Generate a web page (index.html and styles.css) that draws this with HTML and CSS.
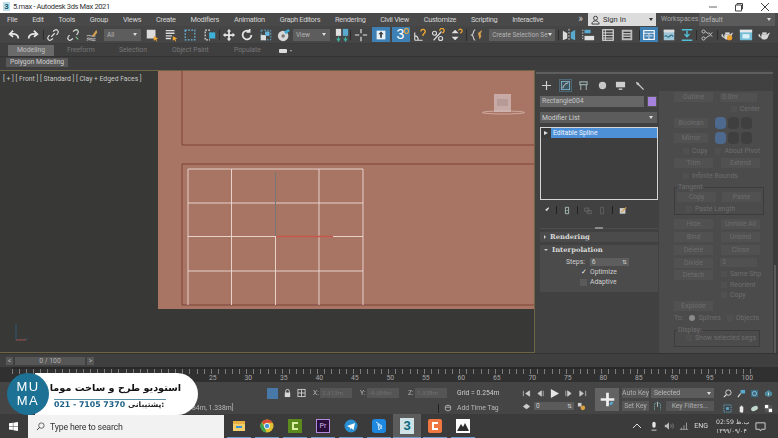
FILE: index.html
```html
<!DOCTYPE html>
<html lang="en">
<head>
<meta charset="utf-8">
<title>5.max - Autodesk 3ds Max 2021</title>
<link rel="stylesheet" href="styles.css">
</head>
<body>
<svg class="defs" width="0" height="0">
  <symbol id="bracket" viewBox="0 0 16 16"><rect x="2.500" y="2.500" width="11" height="11" fill="none" stroke="#68b4dc" stroke-width="1.400" stroke-dasharray="2 1.500"/></symbol>
  <symbol id="teapot" viewBox="0 0 16 16"><path d="M2 7c2-1 1 3 3 3l0-3h7l1-1 2-1-2 4c-1 3-2 4-4 4H7c-1 0-2-1-2-2C2 11 1 8 2 7z" fill="#d8d8d8"/><rect x="6" y="5" width="5" height="2" fill="#d8d8d8"/></symbol>
</svg>

<div class="app">
  <header class="titlebar">
    <div class="title-left">
      <span class="app-icon">3</span>
      <span class="title-text">5.max - Autodesk 3ds Max 2021</span>
    </div>
    <div class="winbtns">
      <svg class="winbtn" viewBox="0 0 10 10"><path d="M1 5h8" stroke="#666" stroke-width="1"/></svg>
      <svg class="winbtn" viewBox="0 0 10 10"><path d="M1.500 3h6v6h-6zM3 3V1.500h5.500V7H7.500" fill="none" stroke="#444" stroke-width="1"/></svg>
      <svg class="winbtn" viewBox="0 0 10 10"><path d="M1 1l8 8M9 1l-8 8" stroke="#444" stroke-width="1"/></svg>
    </div>
  </header>

  <nav class="menubar">
    <div class="menus">
      <span>File</span><span>Edit</span><span>Tools</span><span>Group</span><span>Views</span><span>Create</span><span>Modifiers</span><span>Animation</span><span>Graph Editors</span><span>Rendering</span><span>Civil View</span><span>Customize</span><span>Scripting</span><span>Interactive</span>
    </div>
    <div class="menu-right">
      <span class="more">&raquo;</span>
      <div class="signin">
        <svg class="person" viewBox="0 0 10 10"><circle cx="5" cy="3" r="2.200" fill="none" stroke="#333"/><path d="M1 9.500h8C9 7 7 6 5 6S1 7 1 9.500z" fill="none" stroke="#333"/></svg>
        <span>Sign In</span><i class="caret dark"></i>
      </div>
      <span class="ws-label">Workspaces:</span>
      <div class="ws-drop"><span>Default</span><i class="caret"></i></div>
    </div>
  </nav>

  <div class="toolbar">
    <div class="ti m4"><svg viewBox="0 0 16 16"><path d="M13 12c0-4-3-6-9-5M7 3L3 7l4 3" fill="none" stroke="#e6e6e6" stroke-width="2"/></svg></div>
    <div class="ti"><svg viewBox="0 0 16 16"><path d="M3 12c0-4 3-6 9-5M9 3l4 4-4 3" fill="none" stroke="#e6e6e6" stroke-width="2"/></svg></div>
    <div class="ti m1 sep"><svg viewBox="0 0 16 16"><path d="M6 10l4-4M4 8L2.500 10a2.500 2.500 0 0 0 3.500 3.500L8 12M8 4l2-1.500A2.500 2.500 0 0 1 13.500 6L12 8" fill="none" stroke="#dcdcdc" stroke-width="1.400"/></svg></div>
    <div class="ti"><svg viewBox="0 0 16 16"><path d="M4 8L2.500 10a2.500 2.500 0 0 0 3.500 3.500L8 12M8 4l2-1.500A2.500 2.500 0 0 1 13.500 6L12 8" fill="none" stroke="#dcdcdc" stroke-width="1.400"/><path d="M11 10l3 3M12 3l2-1" stroke="#7ecb8f" stroke-width="1.200"/></svg></div>
    <div class="ti"><svg viewBox="0 0 16 16"><path d="M2 9c3-2 6 2 10 0M2 12c3-2 6 2 10 0M2 14c3-2 6 1 10 0" fill="none" stroke="#c8c8c8"/><path d="M8 9l5-7 1 3-4 5z" fill="#d9a24e"/></svg></div>
    <div class="drop d-all"><span>All</span><i class="caret"></i></div>
    <div class="ti m1"><svg viewBox="0 0 16 16"><rect x="2" y="2" width="10" height="10" fill="#dcdcdc"/><path d="M10 9l5 3-2 1 1 2-1 .500-1-2-2 1z" fill="#f0a830"/></svg></div>
    <div class="ti"><svg viewBox="0 0 16 16"><path d="M2 3h10M2 6h10M2 9h7M2 12h6" stroke="#dcdcdc" stroke-width="1.500"/><path d="M10 9l5 3-2 1 1 2-1 .500-1-2-2 1z" fill="#f0a830"/></svg></div>
    <div class="ti"><svg viewBox="0 0 16 16"><use href="#bracket"/></svg></div>
    <div class="ti"><svg viewBox="0 0 16 16"><path d="M8 2.500H2.500v11H8" fill="none" stroke="#e0e0e0" stroke-dasharray="2 1.500" stroke-width="1.400"/><rect x="7" y="5" width="7" height="7" fill="#3fb1d6"/></svg></div>
    <div class="ti-s m1 sep"><svg viewBox="0 0 16 16"><path d="M8 1l2.500 3h-1.500v3h3V5.500L15 8l-3 2.500V9H9v3h1.500L8 15l-2.500-3H7V9H4v1.500L1 8l3-2.500V7h3V4H5.500z" fill="#e6e6e6"/></svg></div>
    <div class="ti-s"><svg viewBox="0 0 16 16"><path d="M13 8a5 5 0 1 1-2-4M11 1v3.500h-3.500" fill="none" stroke="#e6e6e6" stroke-width="2"/></svg></div>
    <div class="ti-s"><svg viewBox="0 0 16 16"><rect x="2.500" y="2.500" width="11" height="11" fill="none" stroke="#68b4dc" stroke-dasharray="2 1.500"/><rect x="2" y="8" width="6" height="6" fill="#dcdcdc"/><rect x="7" y="4" width="5" height="5" fill="#68b4dc"/></svg></div>
    <div class="ti-s"><svg viewBox="0 0 16 16"><circle cx="7" cy="9" r="6" fill="#d8d8d8"/><circle cx="7" cy="9" r="2" fill="#777"/><path d="M8 4l5-3 2 2-5 4z" fill="#3fa9cf"/></svg></div>
    <div class="drop d-view"><span>View</span><i class="caret"></i></div>
    <div class="ti m2"><svg viewBox="0 0 16 16"><rect x="1" y="1" width="6" height="8" fill="#e0e0e0"/><rect x="9" y="1" width="6" height="8" fill="#5aa9cf"/><path d="M4 15V10M2 12l2 3 2-3M12 15V10M10 12l2 3 2-3" stroke="#3fb1a0" fill="none" stroke-width="1.200"/></svg></div>
    <div class="ti sep"><svg viewBox="0 0 16 16"><path d="M8 1v14M1 8h14" stroke="#e6e6e6" stroke-width="1.300"/><path d="M6 6h4v4H6z" fill="#444"/></svg></div>
    <div class="ti on"><svg viewBox="0 0 16 16"><rect x="3" y="3" width="10" height="10" fill="#e8f2f8"/><path d="M8 4l3 3H9v4H7V7H5z" fill="#3b3b3b"/></svg></div>
    <div class="ti on wide"><span class="snap">3</span><em class="mag"></em></div>
    <div class="ti-s"><svg viewBox="0 0 16 16"><path d="M2 14V5M2 14h9M2 9c3 0 4 2 4 5" fill="none" stroke="#dcdcdc" stroke-width="1.300"/><path d="M9 4a2.500 2.500 0 1 1 4 2l-1.500 1.500V9" fill="none" stroke="#f0a830" stroke-width="1.500"/></svg></div>
    <div class="ti-s"><svg viewBox="0 0 16 16"><path d="M3 14L12 4" stroke="#dcdcdc" stroke-width="1.300"/><circle cx="4" cy="6" r="2.300" fill="none" stroke="#dcdcdc" stroke-width="1.300"/><circle cx="11" cy="12" r="2.300" fill="none" stroke="#dcdcdc" stroke-width="1.300"/><path d="M10 3a2.500 2.500 0 1 1 4 2l-1 1" fill="none" stroke="#f0a830" stroke-width="1.500"/></svg></div>
    <div class="ti-s"><svg viewBox="0 0 16 16"><path d="M7 2l4 4H3zM7 14l4-4H3z" fill="#e0e0e0"/><path d="M11 3a2 2 0 1 1 3 2l-1 1" fill="none" stroke="#f0a830" stroke-width="1.400"/></svg></div>
    <span class="vsep"></span>
    <div class="ti-s"><svg viewBox="0 0 16 16"><path d="M6 2C3 2 5 7 2 8c3 1 1 6 4 6" fill="none" stroke="#d8d8d8" stroke-width="1.200"/><path d="M9 6l5-4-2 5 1 2-2 4-1-4z" fill="#d8a050"/></svg></div>
    <div class="drop d-sel"><span>Create Selection Se</span><i class="caret"></i></div>
    <div class="ti m4 sep"><svg viewBox="0 0 16 16"><path d="M1 3l5 3v6l-5 2z" fill="#dcdcdc"/><path d="M15 2l-5 3v7l5 2z" fill="#5aa9cf"/><path d="M8 1v14" stroke="#e6e6e6" stroke-dasharray="2 1.500"/></svg></div>
    <div class="ti"><svg viewBox="0 0 16 16"><path d="M2 2v12" stroke="#e0e0e0" stroke-dasharray="1.500 1.500"/><rect x="4" y="2" width="7" height="4" fill="#5aa9cf"/><rect x="4" y="9" width="11" height="5" fill="#e0e0e0"/></svg></div>
    <div class="ti"><svg viewBox="0 0 16 16"><rect x="2" y="2" width="12" height="12" fill="none" stroke="#e0e0e0" stroke-width="1.300"/><path d="M2 5.500h12M2 8.500h12M2 11.500h12M5 2v12" stroke="#e0e0e0"/></svg></div>
    <div class="ti"><svg viewBox="0 0 16 16"><rect x="2" y="2" width="12" height="12" fill="#bdbdbd"/><path d="M4 5h8M4 8h8M4 11h8" stroke="#3a3a3a" stroke-width="1.400"/></svg></div>
    <div class="ti on mla sep"><svg viewBox="0 0 16 16"><rect x="2" y="3" width="12" height="10" fill="none" stroke="#fff" stroke-width="1.300"/><path d="M2 6h12M8 6v7M4 9h3M9 9h3" stroke="#fff"/></svg></div>
    <div class="ti"><svg viewBox="0 0 16 16"><rect x="2" y="2" width="12" height="12" fill="#9fc6d8"/><rect x="2" y="2" width="12" height="3" fill="#ddd"/><path d="M3 10c2-4 3 2 5 0s3-3 5 0" stroke="#2b6f8a" fill="none" stroke-width="1.300"/></svg></div>
    <div class="ti-s"><svg viewBox="0 0 16 16"><path d="M2 2h12M2 14h12" stroke="#52c0d8" stroke-width="1.600"/><path d="M8 3v7M5 7l3 3 3-3" stroke="#52c0d8" stroke-width="1.600" fill="none"/></svg></div>
    <div class="ti m1 sep"><svg viewBox="0 0 16 16"><circle cx="4" cy="4" r="1.800" fill="none" stroke="#ccc"/><circle cx="4" cy="12" r="1.800" fill="none" stroke="#ccc"/><path d="M6 4l4 3M6 12l4-3M10 5l4 5M14 5l-4 5" stroke="#ccc"/></svg></div>
    <div class="ti m1 sep"><svg viewBox="0 0 16 16"><use href="#teapot"/><circle cx="11" cy="11" r="3" fill="#e8a030"/></svg></div>
    <div class="ti-s"><svg viewBox="0 0 16 16"><rect x="1" y="2" width="14" height="12" fill="#72bcd6"/><rect x="1" y="2" width="14" height="3" fill="#e6e6e6"/><rect x="4" y="7" width="8" height="5" fill="#d9eef6"/></svg></div>
    <div class="ti-s"><svg viewBox="0 0 16 16"><use href="#teapot"/></svg></div>
  </div>

  <div class="ribbon-tabs">
    <span class="tab active">Modeling</span><span class="tab t-free">Freeform</span><span class="tab t-sel">Selection</span><span class="tab t-obj">Object Paint</span><span class="tab t-pop">Populate</span>
    <span class="tab-btn"></span><i class="caret tiny"></i>
  </div>
  <div class="ribbon-sub"><span class="poly">Polygon Modeling</span></div>

  <main class="main">
    <section class="viewport">
      <div class="vp-label">[ + ] [ Front ] [ Standard ] [ Clay + Edged Faces ]</div>
      <svg class="scene" viewBox="0 0 535 284" width="535" height="284">
        <rect x="158" y="0" width="376" height="239" fill="#a87565"/>
        <path d="M182 0v75h352M534 94H182v141h352" fill="none" stroke="#7c4334" stroke-width="1"/>
        <g stroke="#eddcd5" stroke-width="1" fill="none" opacity=".9">
          <path d="M188 99h175v136M188 99v136M231.500 99v136M319 99v136M275.500 166v69M188 133h175M188 166.500h175M188 201h175"/>
        </g>
        <path d="M275.500 102v64" stroke="#777" stroke-width="1"/>
        <path d="M276 166.500h57" stroke="#c2574a" stroke-width="1.400"/>
        <rect x="494" y="24" width="17" height="18" fill="#c7aaa6"/>
        <rect x="497" y="29" width="11" height="7" fill="#b69a96"/>
        <ellipse cx="503.500" cy="42.500" rx="21" ry="1.500" fill="none" stroke="#dfc5bc" stroke-width="1" opacity=".65"/>
        <path d="M16 270l0-16M16 270l12-1" stroke="#32566e" stroke-width="1"/><path d="M16 270l10 0" stroke="#a0453a" stroke-width="1"/>
      </svg>
    </section>

    <aside class="cmd">
      <div class="cmd-main">
        <div class="cmd-grip"></div>
        <div class="cmd-tabs">
          <svg viewBox="0 0 12 12"><path d="M6 1v10M1 6h10" stroke="#cfcfcf" stroke-width="1.300"/></svg>
          <svg class="tab-on" viewBox="0 0 12 12"><rect x="1.500" y="1.500" width="9" height="9" fill="#3d5561" stroke="#7fb6cc"/><path d="M3 9c1-3 2-5 6-6" stroke="#d8d8d8" fill="none"/></svg>
          <svg viewBox="0 0 12 12"><path d="M2 2h8v3H2zM3 5v6M9 5v6" fill="none" stroke="#9aa" stroke-width="1.200"/></svg>
          <svg viewBox="0 0 12 12"><circle cx="6" cy="6" r="4" fill="#c8c8c8"/></svg>
          <svg viewBox="0 0 12 12"><rect x="1" y="2" width="10" height="6" fill="#cfcfcf"/><path d="M4 10h4" stroke="#cfcfcf" stroke-width="1.500"/></svg>
          <svg viewBox="0 0 12 12"><path d="M2 2l3 1 1 2 5 5-1 1-5-5-2-1z" fill="#c8c8c8"/></svg>
        </div>
        <div class="name-row"><span class="name-field">Rectangle004</span><span class="swatch"></span></div>
        <div class="mod-list"><span>Modifier List</span><i class="caret"></i></div>
        <div class="stack">
          <div class="stack-row"><span class="expander"></span><span>Editable Spline</span></div>
        </div>
        <div class="stack-tools">
          <svg viewBox="0 0 10 10"><path d="M1 9l4-4 1 1 3-4-1-1-4 3 1 1-4 4z" fill="#d8d8d8"/></svg><b></b>
          <svg viewBox="0 0 10 10"><path d="M3 1h4v8H3z" fill="none" stroke="#b8d0c8"/><path d="M4 5h2" stroke="#8dbba8"/></svg><b></b>
          <svg viewBox="0 0 10 10"><path d="M1 2h5v4H1zM4 5h5v4H4z" fill="none" stroke="#6c6c6c"/></svg>
          <svg viewBox="0 0 10 10"><path d="M3 1h4v8H3z" fill="none" stroke="#656565"/></svg><b></b>
          <svg viewBox="0 0 10 10"><rect x="1" y="2" width="7" height="7" fill="#cfcfcf"/><path d="M3 7l6-6" stroke="#d8a040" stroke-width="1.400"/></svg>
        </div>
        <div class="splitter"><span></span></div>
        <div class="rollout r-head"><i class="arrow"></i><strong>Rendering</strong></div>
        <div class="rollout r-body">
          <div class="r-title"><i class="arrow down"></i><strong>Interpolation</strong></div>
          <div class="steps"><span>Steps:</span><span class="spin"><span>6</span><em>&#8645;</em></span></div>
          <label class="chk"><i class="box checked">&#10003;</i>Optimize</label>
          <label class="chk"><i class="box"></i>Adaptive</label>
        </div>
      </div>

      <div class="ghost">
        <div class="g-row h12"><span class="gb w20">Outline</span><span class="gf">0.0m</span></div>
        <div class="g-row h12"><span class="gspace"></span><span class="gc"><i></i>Center</span></div>
        <div class="g-row h15"><span class="gb wb">Boolean</span><span class="tri"><i class="sel"></i><i></i><i></i></span></div>
        <div class="g-row h15"><span class="gb wb">Mirror</span><span class="tri"><i class="sel"></i><i></i><i></i></span></div>
        <div class="g-row h11"><span class="gc l1"><i></i>Copy</span><span class="gc"><i></i>About Pivot</span></div>
        <div class="g-row h13"><span class="gb">Trim</span><span class="gb">Extend</span></div>
        <div class="g-row h13"><span class="gc l1"><i></i>Infinite Bounds</span></div>
        <fieldset class="g-group">
          <legend>Tangent</legend>
          <div class="g-row h12"><span class="gb">Copy</span><span class="gb">Paste</span></div>
          <div class="g-row h11"><span class="gc l1"><i></i>Paste Length</span></div>
        </fieldset>
        <div class="g-row h13"><span class="gb">Hide</span><span class="gb">Unhide All</span></div>
        <div class="g-row h13"><span class="gb">Bind</span><span class="gb">Unbind</span></div>
        <div class="g-row h13"><span class="gb">Delete</span><span class="gb">Close</span></div>
        <div class="g-row h13"><span class="gb">Divide</span><span class="gf">3</span></div>
        <div class="g-detach">
          <span class="gb">Detach</span>
          <div class="g-col">
            <span class="gc"><i></i>Same Shp</span>
            <span class="gc"><i></i>Reorient</span>
            <span class="gc"><i></i>Copy</span>
          </div>
        </div>
        <div class="g-row h12"><span class="gb">Explode</span></div>
        <div class="g-row h12 g-to"><span>To:</span><span class="gc"><i class="radio"></i>Splines</span><span class="gc"><i></i>Objects</span></div>
        <fieldset class="g-group g-display">
          <legend>Display:</legend>
          <span class="gc l1"><i></i>Show selected segs</span>
        </fieldset>
      </div>
      <div class="cmd-scroll"><span></span></div>
    </aside>
  </main>

  <div class="timeslider">
    <span class="ts-btn">&lt;</span><span class="ts-bar">0 / 100</span><span class="ts-btn">&gt;</span>
  </div>

  <div class="track">
    <div class="ticks"></div>
    <div class="frames">
      <span>25</span><span>30</span><span>35</span><span>40</span><span>45</span><span>50</span><span>55</span><span>60</span><span>65</span><span>70</span><span>75</span><span>80</span><span>85</span><span>90</span><span>95</span><span>100</span>
    </div>
  </div>

  <div class="status">
    <div class="st-left">
      <div class="st-coords">
        <span class="st-on"></span>
        <svg viewBox="0 0 10 10"><rect x="2" y="4.500" width="6" height="5" fill="#d8d8d8"/><path d="M3 5V3a2 2 0 0 1 4 0v2" fill="none" stroke="#d8d8d8"/></svg>
        <svg viewBox="0 0 10 10"><rect x="1" y="1" width="8" height="8" fill="none" stroke="#d0d0d0"/><path d="M5 1v8M1 5h8" stroke="#d0d0d0"/></svg>
        <span class="ax">X:</span><span class="cf">2.313m</span>
        <span class="ax ay">Y:</span><span class="cf">-4.384m</span>
        <span class="ax az">Z:</span><span class="cf">1.338m</span>
        <span class="grid-txt">Grid = 0.254m</span>
      </div>
      <div class="st-tag">
        <span class="coord-end">84m, 1.338m]</span>
        <span class="tag-sep"></span>
        <svg viewBox="0 0 10 10"><circle cx="5" cy="5" r="3.600" fill="none" stroke="#c0c0c0"/><path d="M2 4h6" stroke="#c0c0c0"/></svg>
        <span>Add Time Tag</span>
      </div>
    </div>
    <div class="st-play">
      <div class="play-row">
        <svg viewBox="0 0 10 10"><path d="M1.500 2v6M8.500 2L4 5l4.500 3z M3 5" fill="#ccc" stroke="#ccc" stroke-width=".8"/></svg>
        <svg viewBox="0 0 10 10"><path d="M6 2L2 5l4 3zM8 2v6" fill="#ccc" stroke="#ccc" stroke-width=".8"/></svg>
        <svg viewBox="0 0 10 10"><path d="M1 0l9 5-9 5z" fill="#e6e6e6"/></svg>
        <svg viewBox="0 0 10 10"><path d="M4 2l4 3-4 3zM2 2v6" fill="#ccc" stroke="#ccc" stroke-width=".8"/></svg>
        <svg viewBox="0 0 10 10"><path d="M2 2l4 3-4 3zM8.500 2v6" fill="#ccc" stroke="#ccc" stroke-width=".8"/></svg>
      </div>
      <div class="play-row second">
        <svg viewBox="0 0 10 10"><path d="M5 2L1 5l4 3zM5 2l4 3-4 3z" fill="#ccc"/></svg>
        <span class="frame-field"><span>0</span><em>&#8645;</em></span>
        <svg viewBox="0 0 10 10"><rect x="1" y="1" width="4" height="4" fill="#d0d0d0"/><circle cx="6.500" cy="6.500" r="2.600" fill="#d8a040"/></svg>
      </div>
    </div>
    <button class="plus" type="button"><svg viewBox="0 0 20 20"><path d="M10 2v16M2 10h16" stroke="#f0f0f0" stroke-width="3.200"/><path d="M12 15l3-3 2 2-3 3z" fill="#5aa9cf"/></svg></button>
    <div class="keys">
      <div class="key-row"><span class="kbtn">Auto Key</span><span class="kdrop"><span>Selected</span><i class="caret"></i></span></div>
      <div class="key-row"><span class="kbtn">Set Key</span>
        <svg class="kicon" viewBox="0 0 12 12"><path d="M2 11V3l4-2 4 2v8" fill="none" stroke="#68b8c0" stroke-dasharray="2 1"/><path d="M6 1v6" stroke="#ddd"/></svg>
        <span class="kbtn filters">Key Filters...</span></div>
    </div>
    <div class="nav">
      <svg viewBox="0 0 10 10"><circle cx="6" cy="4" r="3" fill="none" stroke="#ddd"/><path d="M4 6L1 9" stroke="#ddd" stroke-width="1.400"/></svg>
      <svg viewBox="0 0 10 10"><rect x="4" y="1" width="5" height="4" fill="#5aa9cf"/><path d="M4 5L1 9" stroke="#ddd" stroke-width="1.300"/></svg>
      <svg viewBox="0 0 10 10"><rect x="1" y="1" width="8" height="8" fill="#3d6a80"/><circle cx="5" cy="5" r="2.400" fill="none" stroke="#8cc8e0"/></svg>
      <svg viewBox="0 0 10 10"><path d="M5 1l4 3v3L5 9 1 7V4z" fill="#4d8ba0"/><path d="M5 4v3" stroke="#ddd"/></svg>
      <svg viewBox="0 0 10 10"><rect x="1" y="1" width="8" height="8" fill="none" stroke="#5aa9cf" stroke-dasharray="1.500 1"/><rect x="3.500" y="3.500" width="3" height="3" fill="#5aa9cf"/></svg>
      <svg viewBox="0 0 10 10"><path d="M3 9V3h1v3-4h1v4-4h1v4-3h1v5l-1 2z" fill="#e8e8e8"/></svg>
      <svg viewBox="0 0 10 10"><ellipse cx="5" cy="5" rx="4" ry="2.500" fill="#c0d8cc" transform="rotate(-25 5 5)"/></svg>
      <svg viewBox="0 0 10 10"><rect x="1" y="1" width="4" height="4" fill="#fff"/><rect x="5" y="5" width="4" height="4" fill="#fff"/><rect x="5" y="1" width="4" height="4" fill="#555"/><rect x="1" y="5" width="4" height="4" fill="#555"/></svg>
    </div>
  </div>

  <footer class="taskbar">
    <svg class="winlogo" viewBox="0 0 10 10"><path d="M0 1.500l4.300-.6v3.800H0zM4.800.8L10 0v4.700H4.800zM0 5.200h4.300V9L0 8.400zM4.800 5.200H10V10l-5.200-.8z" fill="#fff"/></svg>
    <div class="search">
      <svg viewBox="0 0 10 10"><circle cx="6" cy="4" r="3" fill="none" stroke="#333" stroke-width=".8"/><path d="M4 6L1 9" stroke="#333"/></svg>
      <span>Type here to search</span>
    </div>
    <div class="apps">
      <span class="tb-app run"><svg viewBox="0 0 14 14"><rect x="1" y="2" width="12" height="10" fill="#e8b040"/><rect x="1" y="5" width="12" height="7" fill="#f2cf6a"/><rect x="4" y="7" width="6" height="2" fill="#3a8fd0"/></svg></span>
      <span class="tb-app run"><svg viewBox="0 0 14 14"><circle cx="7" cy="7" r="6.500" fill="#e0c030"/><path d="M7 .5a6.500 6.500 0 0 1 5.600 3.300H7a3 3 0 0 0-3 2L1.600 3.300A6.500 6.500 0 0 1 7 .5z" fill="#d84a38"/><path d="M1.600 3.300L4.500 8.500l2 5A6.500 6.500 0 0 1 1.600 3.300z" fill="#3aa050"/><circle cx="7" cy="7" r="2.700" fill="#4a90d8" stroke="#fff" stroke-width=".8"/></svg></span>
      <span class="tb-app run"><svg viewBox="0 0 14 14"><rect width="14" height="14" fill="#5d8a1c"/><path d="M10 4H5v6h5" fill="none" stroke="#d8f0a0" stroke-width="2"/></svg></span>
      <span class="tb-app run"><span class="pr">Pr</span></span>
      <span class="tb-app run"><svg viewBox="0 0 14 14"><circle cx="7" cy="7" r="6.500" fill="#2a8fd0"/><path d="M3 7l8-3-1.500 7-2.500-2-1 1.500V8.500z" fill="#fff"/></svg></span>
      <span class="tb-app run"><svg viewBox="0 0 14 14"><rect width="14" height="14" rx="3" fill="#1e88e0"/><path d="M4 3l6 4-3 4-1-6 4 5" fill="none" stroke="#cfe8ff"/></svg></span>
      <span class="tb-app current"><span class="max3">3</span></span>
      <span class="tb-app run"><svg viewBox="0 0 14 14"><rect width="14" height="14" rx="2" fill="#f07840"/><path d="M10 4H5v6h5" fill="none" stroke="#fff" stroke-width="2"/></svg></span>
      <span class="tb-app run"><svg viewBox="0 0 14 14"><rect width="14" height="14" fill="#fff"/><path d="M1 12l4-7 2 3 2-4 4 8z" fill="#2e2e2e"/></svg></span>
    </div>
    <div class="tray">
      <svg class="tr-up" viewBox="0 0 10 10"><path d="M1 7l4-4 4 4" fill="none" stroke="#e0e0e0"/></svg>
      <svg viewBox="0 0 10 12"><rect x="3" y="1" width="4" height="7" rx="2" fill="#e4e4e4"/><path d="M2 11h6" stroke="#e4e4e4"/></svg>
      <svg viewBox="0 0 12 12"><path d="M1 4.500h2l3-3v9l-3-3H1z" fill="#bbb"/><path d="M8 4c1 1 1 3 0 4M10 3c1.500 2 1.500 4 0 6" stroke="#888" fill="none"/></svg>
      <svg viewBox="0 0 12 12"><path d="M1 10h10M3 10V8M6 10V5M9 10V2" stroke="#aaa"/></svg>
      <span class="eng">ENG</span>
      <div class="clock"><span>02:59 ب.ظ</span><span>۱۳۹۹/۰۹/۰۴</span></div>
      <svg class="notif" viewBox="0 0 12 12"><path d="M1 2h10v7H7l-1 2-1-2H1z" fill="none" stroke="#d8d8d8"/></svg>
    </div>
  </footer>

  <aside class="banner">
    <div class="b-logo"><span>MU</span><span>MA</span></div>
    <div class="b-text">
      <div class="b-title" dir="rtl" lang="fa">استودیو طرح و ساخت موما</div>
      <div class="b-sub"><span class="b-num">021 - 7105 7370</span><span class="b-lab" lang="fa">پشتیبانی:</span></div>
    </div>
  </aside>
</div>
</body>
</html>
```
FILE: styles.css
```css
* { box-sizing: border-box; margin: 0; padding: 0; }
html, body { width: 778px; height: 438px; overflow: hidden; }
body { background: #444; font-family: Roboto, "Open Sans", sans-serif; font-size: 8px; color: #d0d0d0; }
.defs { position: absolute; }
.app { position: relative; width: 778px; height: 438px; display: flex; flex-direction: column; filter: blur(.35px); }
i, em { font-style: normal; }
svg { display: block; flex: none; }

.caret { width: 0; height: 0; border-left: 2.500px solid transparent; border-right: 2.500px solid transparent; border-top: 3px solid #ddd; display: block; flex: none; }
.caret.dark { border-top-color: #333; }
.caret.tiny { border-left-width: 1.500px; border-right-width: 1.500px; border-top-width: 2px; border-top-color: #aaa; margin-left: 3px; }

/* title */
.titlebar { height: 13px; background: #fff; color: #333; display: flex; justify-content: space-between; align-items: center; padding-left: 3px; flex: none; }
.title-left { display: flex; align-items: center; gap: 3px; font-size: 7.500px; }
.title-text { letter-spacing: -.35px; }
.app-icon { width: 7px; height: 9px; background: #bfe0e8; color: #0f5a70; font: bold 8px/9px "Liberation Sans", sans-serif; text-align: center; }
.winbtns { display: flex; gap: 16px; padding-right: 8px; }
.winbtn { width: 10px; height: 10px; }

/* menu */
.menubar { height: 13px; background: #494949; display: flex; justify-content: space-between; flex: none; }
.menus { display: flex; gap: 14.800px; padding-left: 7px; align-items: center; font-size: 7.400px; letter-spacing: -.3px; color: #d4d4d4; white-space: nowrap; }
.menu-right { display: flex; align-items: stretch; }
.more { font-size: 10px; line-height: 12px; margin-right: 5px; color: #ccc; }
.signin { width: 68px; background: #dcdcdc; color: #333; display: flex; align-items: center; padding: 0 3px; gap: 3px; font-size: 7.600px; margin-right: 5px; }
.signin .caret { margin-left: auto; }
.person { width: 9px; height: 10px; }
.ws-label { line-height: 13px; color: #a8a8a8; width: 38px; font-size: 6.800px; }
.ws-drop { width: 76px; background: #5b5b5b; margin-right: 3px; display: flex; align-items: center; justify-content: space-between; padding: 0 4px 0 2px; font-size: 6.800px; color: #b8b8b8; }

/* toolbar */
.toolbar { height: 18px; background: #454545; display: flex; align-items: center; flex: none; border-bottom: 1px solid #3c3c3c; }
.ti { width: 19.300px; height: 16px; display: flex; align-items: center; justify-content: center; flex: none; }
.ti svg, .ti-s svg { width: 14px; height: 14px; }
.ti-s { width: 18.200px; height: 16px; display: flex; align-items: center; justify-content: center; flex: none; }
.ti.on { background: #3e7fb4; width: 18px; height: 15px; margin: 0 1px; }
.ti.on.mla { margin-left: 3.500px; }
.ti.wide { position: relative; }
.sep { position: relative; }
.sep::before { content: ""; position: absolute; left: -1px; top: 3px; width: 1px; height: 10px; background: #2c2c2c; }
.snap { font: 14px/15px "Liberation Sans", sans-serif; color: #fff; }
.mag { width: 5px; height: 6px; border: 1px solid #f0a830; border-radius: 50%; position: absolute; top: 1px; right: 1px; }
.m1 { margin-left: 1px; } .m2 { margin-left: 2px; } .m4 { margin-left: 4px; }
.drop { height: 12px; background: #5d5d5d; display: flex; align-items: center; justify-content: space-between; padding: 0 4px 0 3px; font-size: 6.500px; color: #b4b4b4; flex: none; white-space: nowrap; }
.d-all { width: 37px; margin-left: 2.500px; } .d-view { width: 37px; } .d-sel { width: 66px; margin-left: 3px; font-size: 6.400px; }
.vsep { width: 1px; height: 12px; background: #2d2d2d; margin: 0 1px; flex: none; }

/* ribbon */
.ribbon-tabs { height: 12px; background: #3f3f3f; display: flex; align-items: flex-end; padding-left: 8px; font-size: 6.800px; color: #777; flex: none; }
.tab { white-space: nowrap; line-height: 11px; }
.tab.active { width: 46px; background: #6a6a6a; color: #c0c0c0; text-align: center; }
.t-free { margin-left: 13px; width: 27px; } .t-sel { margin-left: 25px; width: 27px; } .t-obj { margin-left: 26px; width: 36px; } .t-pop { margin-left: 26px; width: 27px; }
.tab-btn { width: 8px; height: 4px; background: #ddd; border-radius: 1px; margin: 0 0 3px 18px; }
.ribbon-tabs .caret { margin-bottom: 4px; }
.ribbon-sub { height: 14px; background: #3d3d3d; padding: 1px 0 3px 6px; flex: none; border-top: 1px solid #333; }
.poly { display: block; width: 62px; height: 9px; background: #585858; color: #cfcfcf; font-size: 6.800px; line-height: 9px; white-space: nowrap; text-align: center; }

/* main */
.main { height: 283px; display: flex; flex: none; background: #454545; }
.viewport { position: relative; width: 535px; height: 283px; background: #383836; border: 1px solid #6e6444; border-width: 1px 1px 1px 0; overflow: hidden; flex: none; }
.scene { position: absolute; left: 0; top: -1px; }
.vp-label { position: absolute; left: 3px; top: 4px; font-size: 6.800px; color: #c8c8c8; z-index: 1; white-space: nowrap; }
.cmd { flex: 1; display: flex; background: #414141; position: relative; min-width: 0; }
.cmd-main { width: 124px; padding: 2px 2px 0 5px; flex: none; }
.cmd-grip { height: 2px; background: #5e5e5e; margin: 0 -2px 4px -4px; width: 238px; }
.cmd-tabs { display: flex; height: 14px; align-items: center; gap: 7.600px; padding-left: 1px; }
.cmd-tabs svg { width: 11px; height: 11px; }
.tab-on { outline: 1px solid #4a6a78; }
.name-row { display: flex; margin-top: 4px; gap: 3px; height: 11px; }
.name-field { width: 104px; background: #666; color: #c4c4c4; font-size: 6.800px; line-height: 11px; padding-left: 2px; }
.swatch { width: 10px; background: #a583dc; border: 1px solid #555; }
.mod-list { margin-top: 5px; height: 11px; width: 117px; background: #5c5c5c; display: flex; align-items: center; justify-content: space-between; padding: 0 4px 0 2px; font-size: 6.800px; color: #d0d0d0; }
.stack { margin-top: 4px; width: 118px; height: 73px; border: 1px solid #d6d6d6; background: #3e3e3e; }
.stack-row { height: 10px; background: #4d90d8; color: #f0f4fa; display: flex; align-items: center; font-size: 6.800px; }
.expander { width: 10px; height: 10px; background: #3a3a3a; margin-right: 2px; position: relative; }
.expander::after { content: ""; position: absolute; left: 3px; top: 2.500px; border-left: 4px solid #ddd; border-top: 2.500px solid transparent; border-bottom: 2.500px solid transparent; }
.stack-tools { display: flex; align-items: center; height: 10px; margin-top: 5px; gap: 6px; padding-left: 2px; }
.stack-tools svg { width: 8px; height: 9px; }
.stack-tools b { width: 1px; height: 8px; background: #222; }
.splitter { height: 12px; margin-top: 2px; display: flex; justify-content: center; align-items: flex-end; border-bottom: 1px solid #4e4e4e; width: 118px; }
.splitter span { width: 8px; height: 2px; background: #8a8a8a; margin-bottom: -1px; }
.rollout { background: #4b4b4b; width: 118px; }
.r-head { height: 10px; margin-top: 3px; display: flex; align-items: center; }
.r-body { margin-top: 3px; height: 47px; }
.r-title { height: 10px; display: flex; align-items: center; }
.rollout strong { font-family: "DejaVu Serif", "Liberation Serif", serif; font-weight: bold; font-size: 6.800px; color: #d8d8d8; white-space: nowrap; }
.arrow { width: 0; height: 0; border-left: 2.500px solid #ccc; border-top: 2px solid transparent; border-bottom: 2px solid transparent; margin: 0 4px 0 4px; flex: none; }
.arrow.down { border-left: 2px solid transparent; border-right: 2px solid transparent; border-top: 2.500px solid #ccc; border-bottom: 0; }
.steps { display: flex; align-items: center; gap: 5px; margin: 2px 0 0 26px; height: 10px; font-size: 6.800px; }
.spin { width: 39px; height: 8px; background: #5e5e5e; display: flex; justify-content: space-between; padding: 0 2px; line-height: 8px; color: #d0d0d0; }
.spin em, .frame-field em { font-size: 6px; }
.chk { display: flex; align-items: center; margin-left: 40px; height: 10px; font-size: 6.800px; gap: 3px; color: #d0d0d0; }
.box { width: 7px; height: 7px; background: #5a5a5a; font-size: 7px; line-height: 7px; text-align: center; color: #eee; }
.box.checked { background: transparent; }

/* dimmed panel */
.ghost { width: 114px; height: 262px; margin-top: 21px; background: #4b4b4b; padding: 0 13px 0 15px; color: #6d6d6d; font-size: 6.900px; flex: none; white-space: nowrap; }
.g-row { display: flex; justify-content: space-between; align-items: center; gap: 6px; }
.h11 { height: 11px; } .h12 { height: 12px; } .h13 { height: 13px; } .h15 { height: 15px; }
.gb { width: 39px; height: 10px; line-height: 10px; text-align: center; background: #515151; flex: none; }
.gb.w20 { width: 39px; } .gb.wb { width: 34px; }
.gf { width: 37px; height: 9px; line-height: 9px; background: #515151; padding-left: 2px; margin-right: 3px; }
.gspace { flex: none; width: 39px; }
.gc { display: flex; align-items: center; gap: 3px; }
.gc i { width: 6px; height: 6px; background: #505050; flex: none; }
.gc i.radio { border-radius: 50%; background: #8a8a8a; }
.gc.l1 { margin-left: 9px; }
.tri { display: flex; gap: 2px; margin-right: 8px; }
.tri i { width: 11px; height: 12px; border-radius: 4px; background: #3f3f3f; }
.tri i.sel { background: #4d6a8e; }
.g-group { border: 1px solid #3c3c3c; padding: 0 2px; margin-top: 2px; height: 31px; width: 86px; }
.g-group legend { font-size: 6.800px; padding: 0 1px; line-height: 7px; }
.g-group + .g-row { margin-top: 2px; }
.g-detach { display: flex; justify-content: space-between; height: 31px; padding-top: 1px; }
.g-col { width: 39px; display: flex; flex-direction: column; gap: 2.500px; }
.g-to { justify-content: flex-start; }
.g-display { height: 20px; margin-top: 3px; }
.cmd-scroll { flex: 1; background: #3c3c3c; padding-top: 195px; }
.cmd-scroll span { display: block; width: 2px; height: 88px; background: #5b5b5b; margin-left: 1px; }

/* time */
.timeslider { height: 14px; background: #3f3f3f; display: flex; align-items: center; padding-left: 6px; gap: 2px; flex: none; font-size: 6.800px; color: #b4b4b4; border-top: 1px solid #333; }
.ts-btn { width: 7px; height: 8px; background: #565656; line-height: 8px; text-align: center; }
.ts-bar { width: 70px; height: 8px; background: #565656; line-height: 8px; text-align: center; }
.track { height: 15px; background: #303030; flex: none; position: relative; }
.ticks { height: 7px; margin-left: 12px; background: repeating-linear-gradient(90deg, #7c7c7c 0 1px, transparent 1px 7.100px) 0 0 / auto 100% no-repeat; width: 739px; border-top: 2px solid #282828; }
.frames { display: flex; padding-left: 209px; height: 8px; font-size: 6.800px; line-height: 9px; color: #a8a8a8; }
.frames span { width: 35.500px; flex: none; }
.status { height: 32px; background: #454545; display: flex; flex: none; }
.st-left { width: 515px; flex: none; padding-left: 267px; }
.st-coords { display: flex; align-items: center; height: 22px; font-size: 6.800px; color: #b4b4b4; white-space: nowrap; }
.st-coords svg { width: 9px; height: 10px; margin-left: 5px; }
.st-on { width: 11px; height: 11px; background: #4878a8; }
.ax { margin-left: 7px; width: 7px; flex: none; }
.ay { margin-left: 8px; } .az { margin-left: 9px; }
.cf { width: 32px; height: 10px; line-height: 10px; background: #555; color: #707070; padding-left: 2px; font-size: 6.200px; flex: none; }
.grid-txt { margin-left: 10px; color: #cfcfcf; }
.st-tag { display: flex; align-items: center; height: 8px; margin-left: -75px; font-size: 6.800px; color: #b8b8b8; white-space: nowrap; gap: 5px; }
.coord-end { width: 243px; color: #bbb; }
.tag-sep { width: 1px; height: 9px; background: #222; margin-left: -2px; }
.st-tag svg { width: 8px; height: 8px; }
.st-play { width: 80px; padding: 6px 0 0 7px; flex: none; }
.play-row { display: flex; gap: 5px; height: 10px; align-items: center; }
.play-row svg { width: 9px; height: 9px; }
.play-row.second { margin-top: 3px; gap: 3px; }
.frame-field { width: 40px; height: 8px; background: #5b5b5b; display: flex; justify-content: space-between; padding: 0 2px; line-height: 8px; font-size: 6.500px; }
.plus { width: 24px; height: 23px; margin: 6px 0 0; background: #636363; border: 0; display: flex; align-items: center; justify-content: center; flex: none; }
.plus svg { width: 17px; height: 17px; }
.keys { margin: 6px 0 0 3px; width: 92px; flex: none; }
.key-row { display: flex; gap: 2px; height: 10px; align-items: center; margin-bottom: 3px; }
.kbtn { width: 27px; height: 10px; line-height: 10px; background: #565656; text-align: center; font-size: 6.800px; color: #b0b0b0; white-space: nowrap; flex: none; }
.kdrop { width: 63px; height: 10px; background: #5d5d5d; display: flex; align-items: center; justify-content: space-between; padding: 0 3px; font-size: 6.800px; color: #b8b8b8; }
.kicon { width: 9px; height: 10px; margin: 0 2px; }
.kbtn.filters { width: 48px; }
.nav { width: 46px; margin: 7px 0 0 9px; display: grid; grid-template-columns: repeat(4, 9px); gap: 4px 4.500px; flex: none; }
.nav svg { width: 9px; height: 9px; }

/* taskbar */
.taskbar { height: 24px; background: #3b3b3b; display: flex; align-items: stretch; flex: none; }
.winlogo { width: 9px; height: 9px; margin: 8px 10px 0 9px; }
.search { width: 196px; background: #f2f2f2; display: flex; align-items: center; gap: 5px; padding-left: 8px; color: #333; font-size: 8.800px; letter-spacing: -.2px; margin-top: 1px; }
.search svg { width: 9px; height: 9px; }
.apps { display: flex; margin-left: 1px; }
.tb-app { width: 28px; display: flex; align-items: center; justify-content: center; position: relative; }
.tb-app svg { width: 14px; height: 14px; }
.tb-app.run::after { content: ""; position: absolute; left: 2px; right: 2px; bottom: 0; height: 1px; background: #6f9fd0; }
.tb-app.current { background: #5c5c5c; }
.tb-app.current::after { content: ""; position: absolute; left: 0; right: 0; bottom: 0; height: 1px; background: #6f9fd0; }
.pr { width: 14px; height: 14px; background: #2a0f3a; border: 1px solid #b48ae0; color: #d6b6f6; font-size: 7px; line-height: 12px; text-align: center; }
.max3 { width: 14px; height: 16px; background: #cfe2e6; color: #0b6a80; font: bold 13px/16px "Liberation Sans", sans-serif; text-align: center; }
.tray { margin-left: auto; display: flex; align-items: center; color: #dcdcdc; font-size: 7px; gap: 5px; padding-right: 12px; }
.tray svg { width: 10px; height: 10px; }
.tr-up { margin-right: 2px; }
.eng { margin: 0 3px 0 0; }
.clock { display: flex; flex-direction: column; width: 32px; font-size: 6.200px; line-height: 9px; white-space: nowrap; font-family: "DejaVu Sans", sans-serif; }
.notif.notif { width: 11px; height: 11px; margin-left: 2px; }

/* overlay */
.banner { position: absolute; left: 7px; top: 372px; display: flex; align-items: center; height: 43px; width: 191px; }
.b-logo { position: relative; z-index: 1; width: 42px; height: 42px; border-radius: 50%; background: #1c7195; color: #fff; font: 13px/14px "Liberation Sans", sans-serif; display: flex; flex-direction: column; align-items: center; justify-content: center; letter-spacing: 1.500px; flex: none; }
.b-text { margin-left: -14px; background: #fff; height: 42px; flex: 1; border-radius: 0 21px 21px 0; padding: 6px 0 0 19px; color: #111; }
.b-title { font: bold 9.700px/17px "DejaVu Sans", sans-serif; width: 127px; white-space: nowrap; text-align: center; }
.b-sub { border-top: 1px solid #5a8fa8; margin-top: 3px; width: 112px; display: flex; align-items: center; gap: 3px; height: 11px; color: #1a5f86; white-space: nowrap; }
.b-num { font: bold 7.800px/11px "DejaVu Sans", sans-serif; }
.b-lab { font: bold 7.600px/11px "DejaVu Sans", sans-serif; color: #222; }
```
